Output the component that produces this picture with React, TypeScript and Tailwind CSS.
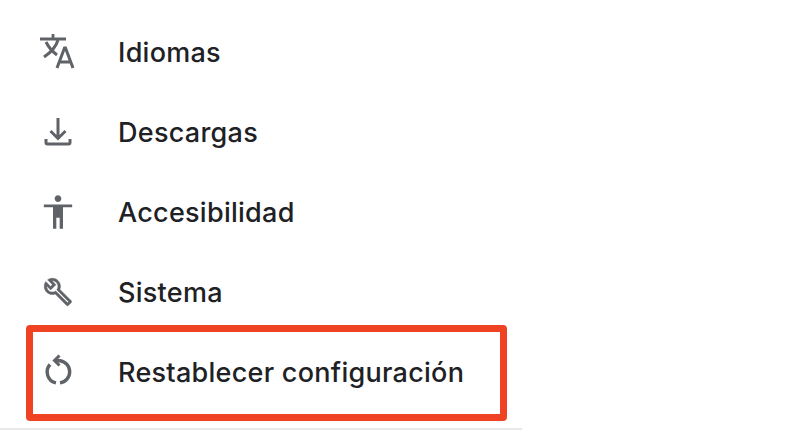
const ink = "#5f6368";

function TranslateIcon() {
  return (
    <svg width="40" height="40" viewBox="0 0 40 40" fill="none" stroke={ink} strokeWidth="2.800">
      <path d="M2 7h26M15 2v5" />
      <path d="M8 10c3 6 7 10 11 13M20 8c-2 7-8 13-14 17" strokeWidth="3" />
      <path d="M19 36l7.500-20h1L35 36M22 30h10.500" strokeWidth="3" />
    </svg>
  );
}

function DownloadIcon() {
  return (
    <svg width="40" height="40" viewBox="0 0 40 40" fill="none" stroke={ink} strokeWidth="3">
      <path d="M20 6v20M12.500 19l7.500 7.500 7.500-7.500" />
      <path d="M8 27v3.500a1.500 1.500 0 0 0 1.500 1.500h21a1.500 1.500 0 0 0 1.500-1.500V27" />
    </svg>
  );
}

function AccessIcon() {
  return (
    <svg width="40" height="40" viewBox="0 0 24 24" fill={ink}>
      <path d="M12 2c1.100 0 2 .9 2 2s-.9 2-2 2-2-.9-2-2 .9-2 2-2zm8.500 5.500v1.600H15V22h-2v-6.500h-2V22H9V9.100H3.500V7.500h17z" />
    </svg>
  );
}

function WrenchIcon() {
  return (
    <svg width="40" height="40" viewBox="-4 -4 32 32" fill={ink} stroke={ink} strokeWidth="0.4">
      <path d="M22.610 18.990l-9.080-9.080c.93-2.340.45-5.100-1.440-7C9.790.61 6.210.4 3.660 2.260L7.500 6.110 6.080 7.520 2.250 3.690C.39 6.230.6 9.820 2.900 12.110c1.860 1.860 4.570 2.350 6.890 1.480l9.110 9.110c.39.39 1.020.39 1.410 0l2.300-2.300c.4-.38.4-1.010 0-1.410zm-3 1.600l-9.460-9.460c-.61.45-1.290.72-2 .82-1.360.2-2.790-.21-3.830-1.250C3.370 9.760 2.930 8.500 3 7.260l3.090 3.090 4.240-4.240-3.090-3.090c1.240-.07 2.490.37 3.440 1.310 1.080 1.080 1.490 2.570 1.240 3.960-.12.71-.42 1.370-.88 1.960l9.450 9.450-.88.88z" />
    </svg>
  );
}

function ResetIcon() {
  return (
    <svg width="40" height="40" viewBox="0 0 40 40" fill="none" stroke={ink} strokeWidth="3.400">
      <path d="M12 12.500a11.200 11.200 0 0 0 6 18.400" />
      <path d="M22 30.900a11.200 11.200 0 0 0 0-22.200L18 8.500" />
      <path d="M21.500 3.500L16.500 8.500l5 5" strokeWidth="3" />
    </svg>
  );
}

const rows = [
  { label: "Idiomas", icon: <TranslateIcon /> },
  { label: "Descargas", icon: <DownloadIcon /> },
  { label: "Accesibilidad", icon: <AccessIcon /> },
  { label: "Sistema", icon: <WrenchIcon /> },
  { label: "Restablecer configuración", icon: <ResetIcon /> },
];

export default function App() {
  return (
    <div className="relative h-[440px] w-[786px] overflow-hidden bg-white font-['Inter','Roboto',sans-serif]">
      <div className="flex w-[522px] flex-col pt-3">
        {rows.map((r) => (
          <div key={r.label} className="flex h-20 items-center pl-[38px]">
            <span className="flex w-[80px] shrink-0">{r.icon}</span>
            <span className="text-[27px] font-medium leading-none tracking-[0.27px] text-[#202124]">{r.label}</span>
          </div>
        ))}
        <div className="mt-4 h-0.5 w-full bg-[#e8e8e8]" />
      </div>
      <div className="absolute left-[26px] top-[325px] h-[96px] w-[481px] rounded-[4px] border-[7px] border-[#f04323]" />
    </div>
  );
}
